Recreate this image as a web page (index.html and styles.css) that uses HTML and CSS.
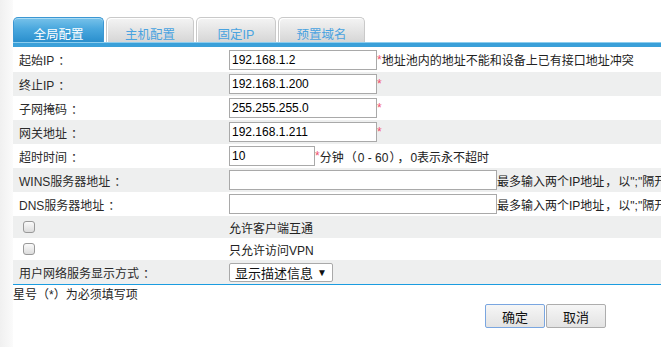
FILE: index.html
```html
<!DOCTYPE html>
<html lang="zh-CN">
<head>
<meta charset="utf-8">
<title>全局配置</title>
<link rel="stylesheet" href="styles.css">
</head>
<body>
<div class="page">
  <div class="strip"></div>
  <div class="main">
    <div class="tabs">
      <div class="tab active">全局配置</div>
      <div class="tab t2">主机配置</div>
      <div class="tab t3">固定IP</div>
      <div class="tab t4">预置域名</div>
    </div>
    <div class="bar"></div>
    <div class="form">
      <div class="row r-first">
        <div class="lbl">起始IP<span class="colon">：</span></div>
        <div class="val"><input class="ip" type="text" value="192.168.1.2"><span class="req">*</span><span class="hint">地址池内的地址不能和设备上已有接口地址冲突</span></div>
      </div>
      <div class="row alt">
        <div class="lbl">终止IP<span class="colon">：</span></div>
        <div class="val"><input class="ip" type="text" value="192.168.1.200"><span class="req">*</span></div>
      </div>
      <div class="row">
        <div class="lbl">子网掩码<span class="colon">：</span></div>
        <div class="val"><input class="ip" type="text" value="255.255.255.0"><span class="req">*</span></div>
      </div>
      <div class="row alt">
        <div class="lbl">网关地址<span class="colon">：</span></div>
        <div class="val"><input class="ip" type="text" value="192.168.1.211"><span class="req">*</span></div>
      </div>
      <div class="row">
        <div class="lbl">超时时间<span class="colon">：</span></div>
        <div class="val"><input class="short" type="text" value="10"><span class="req">*</span><span class="hint">分钟<span class="fw">（</span>0 - 60<span class="fw">）</span><span class="fw">，</span>0表示永不超时</span></div>
      </div>
      <div class="row alt">
        <div class="lbl">WINS服务器地址<span class="colon">：</span></div>
        <div class="val"><input class="wide" type="text" value=""><span class="hint">最多输入两个IP地址<span class="fw">，</span>以";"隔开</span></div>
      </div>
      <div class="row">
        <div class="lbl">DNS服务器地址<span class="colon">：</span></div>
        <div class="val"><input class="wide" type="text" value=""><span class="hint">最多输入两个IP地址<span class="fw">，</span>以";"隔开</span></div>
      </div>
      <div class="row alt r-check">
        <div class="lbl"><input class="cb" type="checkbox"></div>
        <div class="val">允许客户端互通</div>
      </div>
      <div class="row r-check">
        <div class="lbl"><input class="cb" type="checkbox"></div>
        <div class="val">只允许访问VPN</div>
      </div>
      <div class="row alt r-last">
        <div class="lbl">用户网络服务显示方式<span class="colon">：</span></div>
        <div class="val"><span class="select">显示描述信息<span class="arrow">▼</span></span></div>
      </div>
    </div>
    <div class="note">星号（*）为必须填写项</div>
    <div class="buttons">
      <button class="btn primary" type="button">确定</button>
      <button class="btn" type="button">取消</button>
    </div>
  </div>
</div>
</body>
</html>
```

FILE: styles.css
```css
html, body {
  margin: 0;
  padding: 0;
  background: #fff;
  overflow: hidden;
}
body {
  font-family: "Liberation Sans", "Noto Sans CJK SC", sans-serif;
  font-size: 12px;
  color: #222;
}
.page {
  display: flex;
  width: 661px;
  height: 347px;
  overflow: hidden;
}
.strip {
  flex: 0 0 13px;
  background: linear-gradient(to right, #f0f0f0, #f7f7f7 70%, #fbfbfb);
}
.main {
  flex: 0 0 720px;
  width: 720px;
}
.tabs {
  display: flex;
  gap: 2px;
  margin-top: 17px;
  height: 25px;
  align-items: flex-end;
}
.tab {
  box-sizing: border-box;
  height: 25px;
  padding-top: 10px;
  text-align: center;
  border-radius: 5px 5px 0 0;
  border: 1px solid #c9c9c9;
  border-bottom: none;
  background: linear-gradient(#f4f4f4, #e2e2e2 60%, #d6d6d6);
  color: #4aa3e0;
  box-shadow: inset 1px 1px 0 #ffffff;
  line-height: 14px;
  font-size: 12.5px;
}
.tab.active {
  width: 91px;
  border-color: #3b97d3;
  background: linear-gradient(#78c2ea, #4aa8de 45%, #2a8fcd);
  color: #fff;
  box-shadow: inset 0 1px 0 #a9dcf5;
}
.t2 { width: 88px; }
.t3 { width: 80px; }
.t4 { width: 87px; }
.bar {
  height: 5px;
  box-sizing: border-box;
  border-top: 1px solid #8ccdee;
  background: #3aa0d9;
}
.form {
  border-bottom: 1px solid #1a9ce0;
}
.row {
  display: grid;
  grid-template-columns: 216px 1fr;
  height: 24px;
  align-items: center;
  background: #fff;
}
.row.alt {
  background: #eeefef;
}
.r-first { height: 25px; }
.r-check { height: 22px; }
.r-last { height: 24px; }
.lbl {
  padding-left: 6px;
  color: #2a2a2a;
  white-space: nowrap;
}
.colon {
  padding-left: 4px;
}
.fw {
  padding: 0 1px;
}
.val {
  display: flex;
  align-items: center;
  white-space: nowrap;
  color: #222;
}
input[type="text"] {
  box-sizing: border-box;
  height: 20px;
  margin: 0;
  padding: 0 2px;
  border: 1px solid #a9a9a9;
  font-family: "Liberation Sans", "Noto Sans CJK SC", sans-serif;
  font-size: 12px;
  color: #000;
  background: #fff;
}
.ip { width: 148px; }
.short { width: 86px; }
.wide { width: 268px; }
.req {
  color: #f0506e;
  font-size: 12px;
}
.hint {
  color: #222;
}
.cb {
  appearance: none;
  -webkit-appearance: none;
  box-sizing: border-box;
  width: 12px;
  height: 12px;
  margin: 0 0 0 4px;
  display: block;
  border: 1px solid #999;
  border-radius: 3px;
  background: linear-gradient(#fafafa, #dcdcdc);
}
.select {
  box-sizing: border-box;
  display: inline-flex;
  align-items: center;
  width: 104px;
  height: 19px;
  margin-top: 1px;
  padding-left: 5px;
  border: 1px solid #a9a9a9;
  border-radius: 2px;
  background: #fff;
  font-size: 13px;
  color: #111;
}
.arrow {
  font-size: 10px;
  margin-left: 4px;
  color: #111;
}
.note {
  margin-top: 3px;
  color: #222;
  line-height: 14px;
}
.buttons {
  display: flex;
  margin-top: 2px;
  padding-left: 472px;
}
.btn {
  box-sizing: border-box;
  width: 60px;
  height: 24px;
  margin: 0;
  padding: 0;
  border: 1px solid #adadad;
  border-radius: 2px;
  background: linear-gradient(#f6f6f6, #e3e3e3);
  font-family: "Liberation Sans", "Noto Sans CJK SC", sans-serif;
  font-size: 13px;
  color: #111;
}
.btn.primary {
  border-color: #7aa6e0;
  margin-right: 1px;
}
```
